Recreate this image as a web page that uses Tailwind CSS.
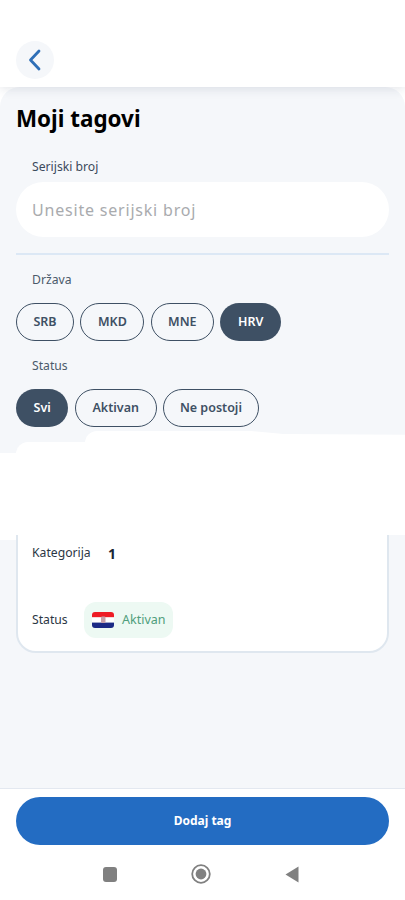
<!DOCTYPE html>
<html lang="en">
<head>
    <meta charset="UTF-8">
    <meta name="viewport" content="width=device-width, initial-scale=1.0">
    <title>Moji tagovi</title>
    <script src="https://cdn.jsdelivr.net/npm/@tailwindcss/browser@4"></script>
</head>
<body class="font-['Noto_Sans','Open_Sans',sans-serif] bg-white">
    <div class="relative w-[405px] h-[900px] overflow-hidden flex flex-col bg-white">
        <!-- header -->
        <header class="relative z-10 h-[87px] shrink-0 bg-white px-4 pt-[41px] shadow-[0_2px_10px_rgba(30,50,80,0.12)]">
            <button class="w-[38px] h-[38px] rounded-full bg-[#f5f7fa] flex items-center justify-center">
                <svg width="16" height="22" viewBox="0 0 16 22" fill="none" stroke="#2f6fb7" stroke-width="2.8" stroke-linecap="round" stroke-linejoin="round"><path d="M12 2 3.5 11l8.5 9"/></svg>
            </button>
        </header>

        <main class="flex-1 bg-[#f5f7fa] rounded-t-[20px] px-4 relative">
            <h1 class="text-[22.4px] leading-[30px] font-bold text-[#000000] mt-[17px]">Moji tagovi</h1>
            <label class="block ml-4 mt-[24px] text-[12.2px] leading-[18px] text-[#3c4a5c]">Serijski broj</label>
            <div class="mt-[6px] h-[55px] rounded-[28px] bg-white flex items-center px-4">
                <span class="text-[16px] tracking-[0.8px] text-[#a9abae]">Unesite serijski broj</span>
            </div>
            <div class="mt-4 h-[2px] bg-[#dce8f5]"></div>

            <label class="block ml-4 mt-4 text-[12.2px] leading-[18px] text-[#4b5a6b]">Država</label>
            <div class="mt-[14px] flex gap-[6.4px]">
                <span class="h-[38px] w-[58px] rounded-full border border-[#3e5064] flex items-center justify-center text-[12.5px] font-semibold text-[#3e5064]">SRB</span>
                <span class="h-[38px] w-[64px] rounded-full border border-[#3e5064] flex items-center justify-center text-[12.5px] font-semibold text-[#3e5064]">MKD</span>
                <span class="h-[38px] w-[63px] rounded-full border border-[#3e5064] flex items-center justify-center text-[12.5px] font-semibold text-[#3e5064]">MNE</span>
                <span class="h-[38px] w-[61px] rounded-full bg-[#3e5064] flex items-center justify-center text-[12.5px] font-semibold text-white">HRV</span>
            </div>

            <label class="block ml-4 mt-[16px] text-[12.2px] leading-[18px] text-[#4b5a6b]">Status</label>
            <div class="mt-[14px] flex gap-[6.4px]">
                <span class="h-[38px] w-[52.3px] rounded-full bg-[#3e5064] flex items-center justify-center text-[12.5px] font-semibold text-white">Svi</span>
                <span class="h-[38px] w-[82px] rounded-full border border-[#3e5064] flex items-center justify-center text-[12.5px] font-semibold text-[#3e5064]">Aktivan</span>
                <span class="h-[38px] w-[95.7px] rounded-full border border-[#3e5064] flex items-center justify-center text-[12.5px] font-semibold text-[#3e5064]">Ne postoji</span>
            </div>

            <!-- tag card -->
            <div class="mt-[16px] h-[210px] rounded-[20px] bg-white border-2 border-[#dfe7ef] px-[14px] flex flex-col justify-end pb-[13px]">
                <div class="flex items-center h-[20px] text-[12.2px] text-[#2b3644]">
                    <span class="w-[76px]">Kategorija</span>
                    <span class="text-[14px] font-bold text-[#1c2633]">1</span>
                </div>
                <div class="flex items-center mt-[39px] text-[12.2px] text-[#2b3644]">
                    <span class="w-[52px]">Status</span>
                    <span class="h-[36px] w-[89px] rounded-[12px] bg-[#edf9f3] flex items-center pl-2 gap-2 text-[12.5px] text-[#4f9e7c]">
                        <svg width="22" height="16" viewBox="0 0 22 16" class="shrink-0">
                            <defs><clipPath id="flag"><rect width="22" height="16" rx="3"/></clipPath></defs>
                            <g clip-path="url(#flag)">
                                <rect width="22" height="5.4" fill="#ee1c25"/>
                                <rect y="5.4" width="22" height="5.2" fill="#ffffff"/>
                                <rect y="10.6" width="22" height="5.4" fill="#1b2a85"/>
                            </g>
                            <rect x="9" y="4.5" width="4.5" height="6.5" rx="1.2" fill="#c9a0a8"/>
                        </svg>
                        Aktivan
                    </span>
                </div>
            </div>
        </main>

        <!-- bottom action -->
        <footer class="h-[112px] shrink-0 bg-white border-t border-[#e3e8f0] px-4 pt-2">
            <button class="w-full h-[48px] rounded-full bg-[#236cc2] text-white text-[12px] font-bold">Dodaj tag</button>
            <div class="mt-[19px] flex items-center justify-center gap-[74px] pr-[3px]">
                <span class="block w-[14px] h-[15px] rounded-[3px] bg-[#808080]"></span>
                <svg width="20" height="20" viewBox="0 0 20 20"><circle cx="10" cy="10" r="8.8" fill="none" stroke="#808080" stroke-width="1.8"/><circle cx="10" cy="10" r="5.4" fill="#808080"/></svg>
                <svg width="14" height="17" viewBox="0 0 14 17"><path d="M13.5 .5v16L.5 8.5z" fill="#808080"/></svg>
            </div>
        </footer>

        <!-- blanked out patch over the card -->
        <div class="absolute z-20 left-0 top-[453px] w-[405px] h-[82px] bg-white"></div>
        <div class="absolute z-20 left-0 top-[535px] w-[16px] h-[5px] bg-white"></div>
        <div class="absolute z-20 left-[16px] top-[442px] w-[80px] h-[20px] bg-white rounded-tl-[12px]"></div>
        <div class="absolute z-20 left-[85px] top-[431px] w-[320px] h-[24px] bg-white rounded-tl-[12px] [clip-path:polygon(0_0,52%_0,62%_12%,100%_16%,100%_100%,0_100%)]"></div>
    </div>
</body>
</html>
